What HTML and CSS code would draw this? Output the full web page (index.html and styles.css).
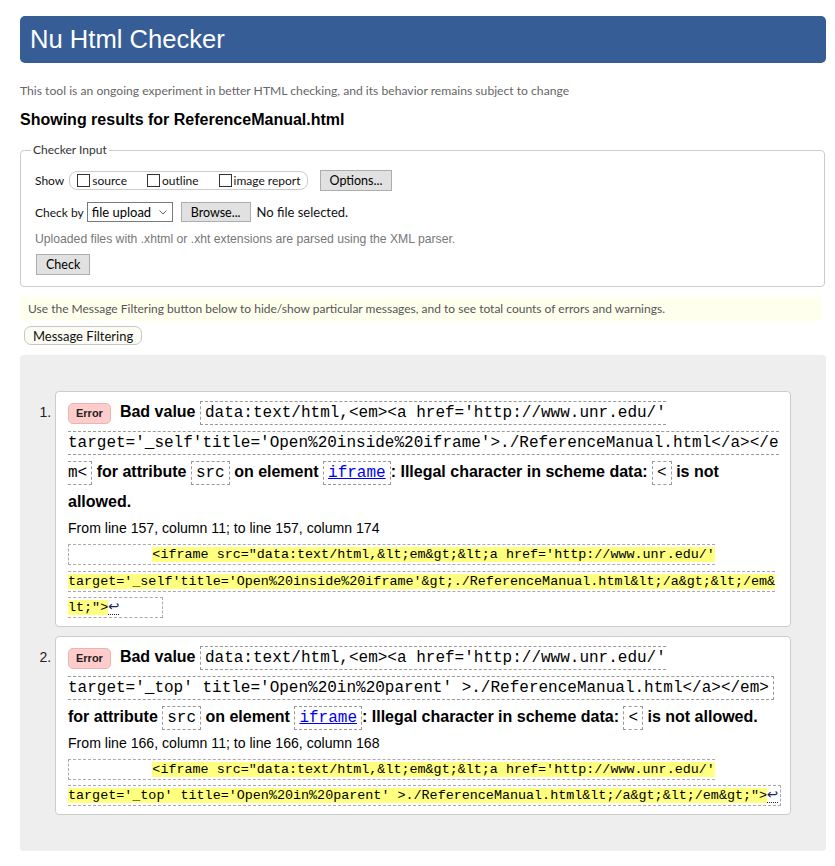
FILE: index.html
```html
<!DOCTYPE html>
<html lang="en">
<head>
<meta charset="utf-8">
<title>Nu Html Checker</title>
<link rel="stylesheet" href="styles.css">
</head>
<body>
<div class="page">
  <h1 class="banner">Nu Html Checker</h1>
  <p class="intro">This tool is an ongoing experiment in better HTML checking, and its behavior remains subject to change</p>
  <h2 class="results-title">Showing results for ReferenceManual.html</h2>
  <fieldset class="checker">
    <legend>Checker Input</legend>
    <div class="row">
      <span class="row-label">Show</span>
      <span class="show-group">
        <label class="opt"><input type="checkbox">source</label>
        <label class="opt"><input type="checkbox">outline</label>
        <label class="opt"><input type="checkbox">image report</label>
      </span>
      <button type="button" class="btn btn-options">Options...</button>
    </div>
    <div class="row row-checkby">
      <span class="row-label">Check by</span>
      <span class="select-wrap">
        <select class="select"><option>file upload</option></select>
        <svg class="chev" width="8" height="5" viewBox="0 0 8 5"><path d="M0.5 0.5 L4 4 L7.5 0.5" fill="none" stroke="#666" stroke-width="1"/></svg>
      </span>
      <button type="button" class="btn btn-browse">Browse...</button>
      <span class="nofile">No file selected.</span>
    </div>
    <p class="help">Uploaded files with .xhtml or .xht extensions are parsed using the XML parser.</p>
    <button type="button" class="btn btn-check">Check</button>
  </fieldset>
  <p class="filter-note">Use the Message Filtering button below to hide/show particular messages, and to see total counts of errors and warnings.</p>
  <button type="button" class="filter-btn">Message Filtering</button>
  <div class="results">
    <ol class="messages">
      <li class="msg">
        <p class="msg-text"><span class="badge">Error</span>Bad value <code>data:text/html,&lt;em&gt;&lt;a href='http://www.unr.edu/'<br>target='_self'title='Open%20inside%20iframe'&gt;./ReferenceManual.html&lt;/a&gt;&lt;/e<br>m&lt;</code> for attribute <code>src</code> on element <code><a href="#">iframe</a></code>: Illegal character in scheme data: <code>&lt;</code> is not allowed.</p>
        <p class="location">From line 157, column 11; to line 157, column 174</p>
        <p class="extract"><code>          <b>&lt;iframe src="data:text/html,&amp;lt;em&amp;gt;&amp;lt;a href='http://www.unr.edu/'<br>target='_self'title='Open%20inside%20iframe'&amp;gt;./ReferenceManual.html&amp;lt;/a&amp;gt;&amp;lt;/em&amp;<br>lt;"&gt;</b><span class="lf" title="Line break">↩</span>     </code></p>
      </li>
      <li class="msg">
        <p class="msg-text"><span class="badge">Error</span>Bad value <code>data:text/html,&lt;em&gt;&lt;a href='http://www.unr.edu/'<br>target='_top' title='Open%20in%20parent' &gt;./ReferenceManual.html&lt;/a&gt;&lt;/em&gt;</code> for attribute <code>src</code> on element <code><a href="#">iframe</a></code>: Illegal character in scheme data: <code>&lt;</code> is not allowed.</p>
        <p class="location">From line 166, column 11; to line 166, column 168</p>
        <p class="extract"><code>          <b>&lt;iframe src="data:text/html,&amp;lt;em&amp;gt;&amp;lt;a href='http://www.unr.edu/'<br>target='_top' title='Open%20in%20parent' &gt;./ReferenceManual.html&amp;lt;/a&amp;gt;&amp;lt;/em&amp;gt;"&gt;</b><span class="lf" title="Line break">↩</span></code></p>
      </li>
    </ol>
  </div>
</div>
</body>
</html>
```

FILE: styles.css
```css
* { box-sizing: border-box; }

body {
  margin: 0;
  background: #fff;
  color: #000;
  font-family: "Liberation Sans", Arial, sans-serif;
}

.page {
  padding: 16px 9px 0 20px;
}

.banner {
  margin: 0;
  height: 47px;
  line-height: 47px;
  padding-left: 10px;
  background: #365d95;
  color: #fff;
  font-size: 25.6px;
  font-weight: normal;
  border-radius: 5px;
}

.intro {
  margin: 20px 0 0;
  font: 12.15px/16px Lato, sans-serif;
  color: #666;
}

.results-title {
  margin: 11px 0 0;
  font: bold 16px/20px "Liberation Sans", Arial, sans-serif;
}

.checker {
  margin: 12px 1px 0 0;
  padding: 0 14px 11px;
  border: 1px solid #ccc;
  border-radius: 4px;
  min-width: 0;
}

.checker legend {
  margin-left: -4px;
  padding: 0 2px;
  font: 12px/16px Lato, sans-serif;
  color: #333;
}

.row {
  display: flex;
  align-items: center;
  height: 22px;
  margin-top: 11px;
  font: 12px Lato, sans-serif;
  color: #111;
}

.row-checkby {
  margin-top: 10px;
}

.row-label {
  margin-right: 5px;
}

.row-checkby .row-label {
  margin-right: 3px;
}

.show-group {
  display: inline-flex;
  align-items: center;
  height: 19px;
  padding: 0 6px 0 7px;
  border: 1px solid #ccc;
  border-radius: 8px;
  font-size: 12px;
}

.opt {
  display: inline-flex;
  align-items: center;
}

.opt + .opt {
  margin-left: 20px;
}

.opt input {
  appearance: none;
  -webkit-appearance: none;
  width: 13px;
  height: 13px;
  margin: 0 2px 0 0;
  border: 1px solid #333;
  background: #fff;
}

.btn {
  height: 21px;
  padding: 0 9px;
  border: 1px solid #adadad;
  border-radius: 0;
  background: #e1e1e1;
  color: #000;
  font: 12.5px Lato, sans-serif;
}

.btn-options {
  margin-left: 12px;
}

.select-wrap {
  display: inline-flex;
  align-items: center;
}

.select {
  appearance: none;
  -webkit-appearance: none;
  width: 86px;
  height: 20px;
  padding: 0 0 0 4px;
  border: 1px solid #7a7a7a;
  border-radius: 0;
  background: #fff;
  color: #000;
  font: 13px Lato, sans-serif;
}

.chev {
  margin-left: -14px;
  margin-right: 6px;
  pointer-events: none;
}

.btn-browse {
  height: 20px;
  margin-left: 8px;
}

.nofile {
  margin-left: 6px;
  font-size: 13px;
}

.help {
  margin: 8px 0 0;
  font: 12.2px/16px "Liberation Sans", Arial, sans-serif;
  color: #777;
}

.btn-check {
  display: block;
  margin-top: 7px;
  margin-left: 1px;
  padding: 0 9px;
}

.filter-note {
  margin: 10px 4px 0 0;
  height: 24px;
  padding: 0 8px;
  background: #ffffee;
  font: 12px/24px Lato, sans-serif;
  color: #555;
}

.filter-btn {
  display: block;
  height: 19px;
  margin: 5px 0 0 4px;
  padding: 0 8px;
  border: 1px solid #c8c8c0;
  border-radius: 7px;
  background: #fcfcf4;
  color: #111;
  font: 13px Lato, sans-serif;
}

.results {
  margin-top: 10px;
  padding: 36px 35px 36px;
  background: #eee;
  border-radius: 4px;
}

.messages {
  margin: 0;
  padding: 0;
  list-style: decimal outside;
}

.msg {
  padding: 5px 8px 4px 12px;
  background: #fff;
  border: 1px solid #ccc;
  border-radius: 4px;
  font-size: 14px;
  color: #222;
}

.msg + .msg {
  margin-top: 9px;
}

.msg-text {
  margin: 0;
  font-size: 16px;
  line-height: 30px;
  font-weight: bold;
  color: #000;
}

.badge {
  display: inline-block;
  margin-right: 9px;
  padding: 3px 7px;
  border: 1px solid #e8b4b4;
  border-radius: 5px;
  background: #fcc;
  color: #222;
  font-size: 11px;
  line-height: 13px;
}

.msg-text code {
  font: 16px/1 "Liberation Mono", "Courier New", monospace;
  white-space: nowrap;
  padding: 2px 4px;
  border: 1px dashed #999;
}

.msg-text code a {
  color: #00e;
  text-decoration: underline;
}

.location {
  margin: 0;
  font-size: 14.1px;
  line-height: 22px;
  color: #000;
}

.extract {
  margin: 3px 0 0;
  font: 13.4px/26.5px "Liberation Mono", "Courier New", monospace;
  color: #000;
}

.extract code {
  font: inherit;
  white-space: pre;
  padding: 2px 2px 2px 3px;
  border: 1px dashed #aaa;
}

.extract b {
  font-weight: normal;
  background: #ffff80;
}

.lf {
  font-family: "DejaVu Sans", sans-serif;
  line-height: 1;
  color: #1c2456;
  border-bottom: 1px dotted #222;
}
```
